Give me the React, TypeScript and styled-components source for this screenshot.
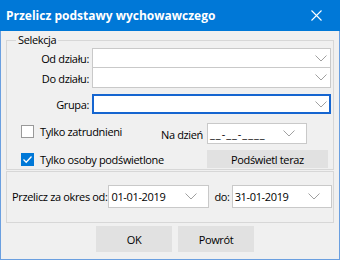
import React from "react";
import styled, { createGlobalStyle } from "styled-components";

const GlobalStyle = createGlobalStyle`
  html, body {
    margin: 0;
    padding: 0;
    background: #ffffff;
  }
  body {
    font-family: "Open Sans", "Liberation Sans", sans-serif;
    font-size: 11px;
    letter-spacing: -0.35px;
    color: #000000;
  }
`;

const Window = styled.div`
  width: 340px;
  height: 260px;
  display: flex;
  flex-direction: column;
`;

const TitleBar = styled.div`
  height: 31px;
  flex: none;
  background: #0078d7;
  color: #ffffff;
  display: flex;
  align-items: center;
  justify-content: space-between;
  padding: 0 18px 0 6px;
  box-sizing: border-box;
`;

const Title = styled.div`
  font-weight: 700;
  font-size: 12px;
  letter-spacing: 0;
`;

const Body = styled.div`
  flex: 1;
  background: #f0f0f0;
  border: 1px solid #6a9fe0;
  border-top: none;
  padding: 2px 5px 0 5px;
  display: flex;
  flex-direction: column;
  white-space: nowrap;
`;

const GroupBox = styled.fieldset<{ $pad: string }>`
  margin: 0;
  padding: ${(p) => p.$pad};
  border: 1px solid #d7d7d7;
  min-width: 0;
  & + & {
    margin-top: 1px;
  }
`;

const Legend = styled.legend`
  margin-left: 9px;
  padding: 0 2px;
  line-height: 14px;
`;

const FieldGrid = styled.div`
  display: grid;
  grid-template-columns: 85px 239px;
  align-items: center;
`;

const Label = styled.label`
  text-align: right;
  padding-right: 3px;
`;

const Combo = styled.div<{ $focus?: boolean; $h?: number; $w?: number; $inset?: number }>`
  height: ${(p) => p.$h ?? 20}px;
  width: ${(p) => (p.$w ? `${p.$w}px` : "auto")};
  flex: none;
  box-sizing: border-box;
  background: #ffffff;
  border: ${(p) => (p.$focus ? "2px solid #1565d0" : "1px solid #c9c9c9")};
  display: flex;
  align-items: center;
  justify-content: space-between;
  padding: 0 ${(p) => p.$inset ?? 3}px 0 2px;
  & + & {
    margin-top: -1px;
  }
`;

const StackedCombos = styled.div`
  grid-column: 2;
  display: flex;
  flex-direction: column;
`;

const OptionsGrid = styled.div`
  display: grid;
  grid-template-columns: 1fr auto 121px;
  grid-template-rows: 21px 18px;
  row-gap: 6px;
  margin-top: 9px;
  padding: 0 3px 0 14px;
  align-items: center;
`;

const Check = styled.label<{ $span?: boolean; $shift?: number }>`
  display: flex;
  align-items: center;
  gap: 6px;
  grid-column: ${(p) => (p.$span ? "1 / 3" : "1")};
  margin-top: ${(p) => p.$shift ?? 0}px;
`;

const Box = styled.span<{ $checked?: boolean }>`
  width: 13px;
  height: 13px;
  box-sizing: border-box;
  flex: none;
  display: flex;
  align-items: center;
  justify-content: center;
  background: ${(p) => (p.$checked ? "#0078d7" : "#ffffff")};
  border: 1px solid ${(p) => (p.$checked ? "#0078d7" : "#999999")};
`;

const SideLabel = styled.span`
  justify-self: end;
  padding-right: 4px;
  margin-top: 2px;
`;

const Button = styled.button<{ $w: number; $h: number }>`
  width: ${(p) => p.$w}px;
  height: ${(p) => p.$h}px;
  border: none;
  background: #e1e1e1;
  font: inherit;
  letter-spacing: inherit;
  color: #000;
  padding: 0;
`;

const PeriodRow = styled.div`
  display: flex;
  align-items: center;
`;

const PeriodLabel = styled.span<{ $gap: number }>`
  margin-right: ${(p) => p.$gap}px;
`;

const Placeholder = styled.span`
  letter-spacing: 1px;
`;

const ButtonRow = styled.div`
  display: flex;
  justify-content: center;
  gap: 6px;
  margin-top: 3px;
  padding-left: 10px;
`;

function Chevron() {
  return (
    <svg width="12" height="7" viewBox="0 0 12 7">
      <polyline points="0.5,0.5 6,6 11.5,0.5" fill="none" stroke="#a0a0a0" strokeWidth="1" />
    </svg>
  );
}

function CloseIcon() {
  return (
    <svg width="11" height="11" viewBox="0 0 11 11">
      <path d="M0.5 0.5 L10.5 10.5 M10.5 0.5 L0.5 10.5" stroke="#ffffff" strokeWidth="1.1" />
    </svg>
  );
}

function CheckMark() {
  return (
    <svg width="11" height="11" viewBox="0 0 11 11">
      <polyline points="1.5,5.5 4.2,8.2 9.5,2.5" fill="none" stroke="#ffffff" strokeWidth="1.3" />
    </svg>
  );
}

export default function App() {
  return (
    <>
      <GlobalStyle />
      <Window>
        <TitleBar>
          <Title>Przelicz podstawy wychowawczego</Title>
          <CloseIcon />
        </TitleBar>
        <Body>
          <GroupBox $pad="1px 2px 1px 0">
            <Legend>Selekcja</Legend>
            <FieldGrid>
              <Label style={{ gridRow: 1 }}>Od działu:</Label>
              <Label style={{ gridRow: 2 }}>Do działu:</Label>
              <StackedCombos style={{ gridRow: "1 / 3" }}>
                <Combo $h={20}>
                  <span />
                  <Chevron />
                </Combo>
                <Combo $h={21}>
                  <span />
                  <Chevron />
                </Combo>
              </StackedCombos>
            </FieldGrid>
            <FieldGrid style={{ marginTop: 6 }}>
              <Label>Grupa:</Label>
              <Combo $focus $h={20} $inset={2}>
                <span />
                <Chevron />
              </Combo>
            </FieldGrid>
            <OptionsGrid>
              <Check $shift={-5}>
                <Box />
                Tylko zatrudnieni
              </Check>
              <SideLabel>Na dzień</SideLabel>
              <Combo $h={21} $w={100} $inset={11}>
                <Placeholder>__-__-____</Placeholder>
                <Chevron />
              </Combo>
              <Check $span>
                <Box $checked>
                  <CheckMark />
                </Box>
                Tylko osoby podświetlone
              </Check>
              <Button $w={121} $h={18}>Podświetl teraz</Button>
            </OptionsGrid>
          </GroupBox>
          <GroupBox $pad="13px 0 14px 5px">
            <PeriodRow>
              <PeriodLabel $gap={1}>Przelicz za okres od:</PeriodLabel>
              <Combo $h={23} $w={101} $inset={11}>
                <span>01-01-2019</span>
                <Chevron />
              </Combo>
              <PeriodLabel $gap={2} style={{ marginLeft: 5 }}>do:</PeriodLabel>
              <Combo $h={23} $w={100} $inset={11}>
                <span>31-01-2019</span>
                <Chevron />
              </Combo>
            </PeriodRow>
          </GroupBox>
          <ButtonRow>
            <Button $w={76} $h={26}>OK</Button>
            <Button $w={76} $h={26}>Powrót</Button>
          </ButtonRow>
        </Body>
      </Window>
    </>
  );
}
